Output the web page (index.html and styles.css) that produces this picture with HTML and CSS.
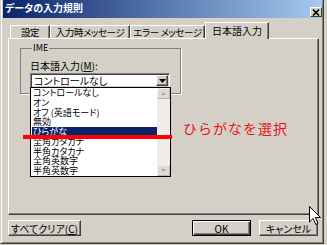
FILE: index.html
```html
<!DOCTYPE html>
<html lang="ja">
<head>
<meta charset="utf-8">
<title>データの入力規則</title>
<link rel="stylesheet" href="styles.css">
</head>
<body>
<div class="window">
  <div class="titlebar">
    <span class="title">データの入力規則</span>
    <span class="close-btn"><svg width="8" height="7" viewBox="0 0 8 7"><path d="M1 0.5 L7 6.5 M7 0.5 L1 6.5" stroke="#000" stroke-width="1.6"/></svg></span>
  </div>
  <div class="content">
    <div class="tabs">
      <div class="tab tab-1">設定</div>
      <div class="tab tab-2">入力時メッセージ</div>
      <div class="tab tab-3">エラー メッセージ</div>
      <div class="tab tab-active">日本語入力</div>
    </div>
    <div class="panel">
      <fieldset class="group">
        <legend class="group-label">IME</legend>
        <div class="field-label">日本語入力(<u>M</u>):</div>
        <div class="combo">
          <div class="combo-value">コントロールなし</div>
          <div class="combo-btn"><svg width="7" height="4" viewBox="0 0 7 4"><path d="M0 0 H7 L3.5 4 Z" fill="#000"/></svg></div>
          <div class="dropdown">
            <ul class="options">
              <li>コントロールなし</li>
              <li>オン</li>
              <li>オフ (英語モード)</li>
              <li>無効</li>
              <li class="selected">ひらがな</li>
              <li>全角カタカナ</li>
              <li>半角カタカナ</li>
              <li>全角英数字</li>
              <li>半角英数字</li>
            </ul>
            <div class="scrollbar">
              <div class="sb-btn"><svg width="5" height="3" viewBox="0 0 5 3"><path d="M2.5 0 L5 3 H0 Z" fill="#a8a5a0"/></svg></div>
              <div class="sb-track"></div>
              <div class="sb-btn"><svg width="5" height="3" viewBox="0 0 5 3"><path d="M0 0 H5 L2.5 3 Z" fill="#a8a5a0"/></svg></div>
            </div>
          </div>
        </div>
      </fieldset>
      <div class="mark-line"></div>
      <div class="mark-note">ひらがなを選択</div>
    </div>
    <div class="buttons">
      <button class="btn btn-clear">すべてクリア(<u>C</u>)</button>
      <button class="btn btn-ok">OK</button>
      <button class="btn btn-cancel">キャンセル</button>
    </div>
  </div>
</div>
<svg class="cursor" width="12" height="20" viewBox="0 0 12 20"><path d="M0.5 0.5 L0.5 16 L4.2 12.4 L6.8 18.5 L9 17.5 L6.4 11.5 L11.5 11.5 Z" fill="#fff" stroke="#000" stroke-width="1"/></svg>
</body>
</html>
```

FILE: styles.css
```css
* { box-sizing: border-box; }
html, body { margin: 0; padding: 0; }
body {
  width: 327px;
  height: 245px;
  overflow: hidden;
  background: #d4d0c8;
  font-family: "Noto Sans CJK JP", "Noto Sans", sans-serif;
  font-size: 10px;
  color: #000;
  font-feature-settings: "palt";
}
.window {
  width: 324px;
  height: 244px;
  display: flex;
  flex-direction: column;
  border: 1px solid;
  border-top: 0;
  border-color: #d4d0c8 #404040 #404040 #d4d0c8;
  padding: 0 1px 1px 2px;
  box-shadow: inset 1px 0 #fff, inset -1px -1px #808080;
}
.titlebar {
  height: 18px;
  flex: none;
  display: flex;
  justify-content: space-between;
  align-items: flex-end;
  padding: 0 0 1px 2px;
  background: linear-gradient(to right, #0a246a, #a6caf0);
}
.title {
  align-self: flex-start;
  padding-top: 2px;
  line-height: 12px;
  color: #fff;
  font-weight: bold;
  font-size: 10px;
}
.close-btn {
  width: 12px;
  height: 10px;
  display: flex;
  align-items: center;
  justify-content: center;
  background: #d4d0c8;
  border: 1px solid;
  border-color: #fff #404040 #404040 #fff;
}
.content {
  flex: 1;
  display: flex;
  flex-direction: column;
  padding: 4px 3px 0 5px;
}
.tabs {
  height: 16px;
  flex: none;
  display: flex;
  align-items: flex-end;
  padding-left: 2px;
}
.tab {
  height: 13px;
  line-height: 12px;
  text-align: center;
  background: #d4d0c8;
  border-top: 1px solid #fff;
  border-left: 1px solid #fff;
  border-right: 1px solid #404040;
  box-shadow: inset -1px 0 #808080;
  white-space: nowrap;
  font-size: 9.5px;
  letter-spacing: -0.4px;
}
.tab-1 { width: 40px; }
.tab-2 { width: 80px; }
.tab-3 { width: 75px; }
.tab-active {
  width: 64px;
  height: 17px;
  line-height: 15px;
  margin-bottom: -1px;
  position: relative;
  z-index: 1;
  font-size: 10px;
  letter-spacing: 0;
}
.panel {
  height: 177px;
  flex: none;
  position: relative;
  border: 1px solid;
  border-color: #fff #404040 #404040 #fff;
  box-shadow: inset -1px -1px #808080;
}
.group {
  width: 161px;
  margin: 4px 0 0 11px;
  padding: 0 11px 5px 9px;
  border: 1px solid #808080;
  box-shadow: 1px 1px 0 #fff;
  min-width: 0;
}
.group-label {
  margin-left: 2px;
  padding: 0 1px;
  line-height: 10px;
  font-size: 9px;
}
.field-label {
  margin-top: 7px;
  line-height: 11px;
  white-space: nowrap;
}
.combo {
  position: relative;
  width: 140px;
  height: 15px;
  margin-top: 2px;
  display: flex;
  background: #fff;
  border: 1px solid;
  border-color: #808080 #fff #fff #808080;
  box-shadow: inset 1px 1px #404040, inset -1px -1px #d4d0c8;
  padding: 1px;
}
.combo-value {
  flex: 1;
  line-height: 11px;
  padding-left: 2px;
  white-space: nowrap;
}
.combo-btn {
  width: 12px;
  display: flex;
  align-items: center;
  justify-content: center;
  background: #d4d0c8;
  border: 1px solid;
  border-color: #fff #404040 #404040 #fff;
  box-shadow: inset -1px -1px #808080;
}
.dropdown {
  position: absolute;
  top: 100%;
  left: -1px;
  width: 141px;
  height: 90px;
  display: flex;
  background: #fff;
  border: 1px solid #000;
  z-index: 2;
}
.options {
  flex: 1;
  list-style: none;
  margin: 0;
  padding: 0 0 0 1px;
  font-size: 9px;
}
.options li {
  height: 9.75px;
  line-height: 9.75px;
  padding-left: 1px;
  white-space: nowrap;
}
.options li.selected {
  background: #0a246a;
  color: #fff;
}
.scrollbar {
  width: 13px;
  display: flex;
  flex-direction: column;
  background: #eeece8;
}
.sb-btn {
  height: 11px;
  display: flex;
  align-items: center;
  justify-content: center;
  background: #dedbd5;
  border: 1px solid;
  border-color: #f4f3f1 #b8b5b0 #b8b5b0 #f4f3f1;
}
.sb-track { flex: 1; }
.mark-line {
  position: absolute;
  left: 14px;
  top: 96px;
  width: 149px;
  height: 4px;
  background: #f00;
  z-index: 3;
}
.mark-note {
  position: absolute;
  left: 174px;
  top: 81px;
  font-size: 14px;
  line-height: 16px;
  letter-spacing: 1px;
  color: #e8141a;
  font-feature-settings: normal;
  white-space: nowrap;
}
.buttons {
  display: flex;
  margin-top: 5px;
  height: 16px;
  gap: 8px;
  padding-right: 1px;
}
.btn {
  height: 16px;
  padding: 0;
  font: inherit;
  line-height: 13px;
  color: #000;
  background: #d4d0c8;
  border: 1px solid;
  border-color: #fff #404040 #404040 #fff;
  box-shadow: inset -1px -1px #808080;
  white-space: nowrap;
}
.btn-clear { width: 73px; }
.btn-ok {
  width: 59px;
  margin-left: auto;
  border-color: #000;
  box-shadow: inset 1px 1px #fff, inset -1px -1px #404040, inset -2px -2px #808080;
}
.btn-cancel { width: 59px; }
.cursor {
  position: absolute;
  left: 309px;
  top: 206px;
}
```
